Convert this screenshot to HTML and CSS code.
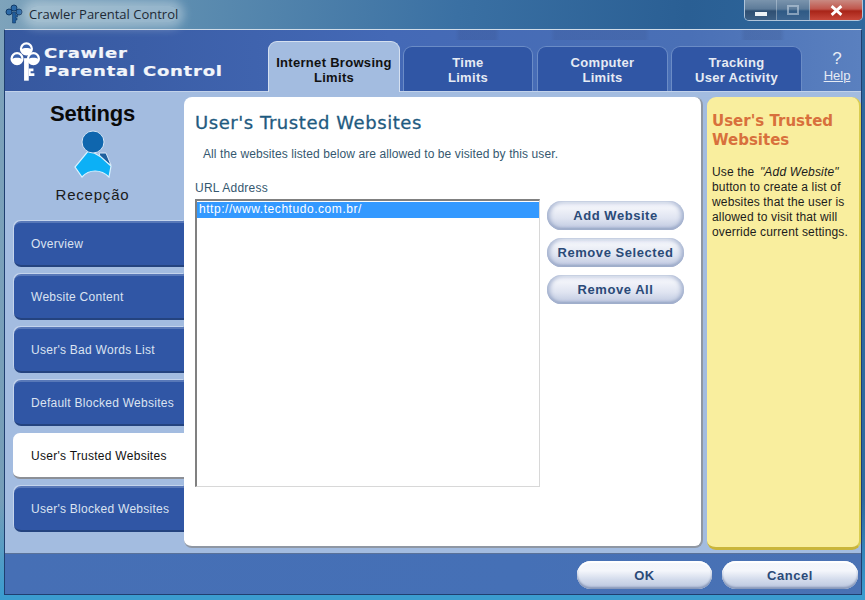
FILE: index.html
```html
<!DOCTYPE html>
<html lang="en">
<head>
<meta charset="utf-8">
<title>Crawler Parental Control</title>
<link rel="stylesheet" href="styles.css">
</head>
<body>
<div class="desktop">
  <div class="titlebar">
    <svg class="title-icon" viewBox="0 0 18 20" aria-hidden="true">
      <circle cx="9" cy="4" r="3" fill="#2c6aa8" stroke="#123a66"/>
      <circle cx="4" cy="8" r="3" fill="#2c6aa8" stroke="#123a66"/>
      <circle cx="14" cy="8" r="3" fill="#2c6aa8" stroke="#123a66"/>
      <path d="M7.500 8h3v3h2v2h-2v1h1.500v2h-1.500v3h-3z" fill="#1f5c9c" stroke="#123a66" stroke-width=".6"/>
    </svg>
    <span class="title-text">Crawler Parental Control</span>
    <div class="controls">
      <div class="ctl ctl-min"><span class="min-glyph"></span></div>
      <div class="ctl ctl-max"><span class="max-glyph"></span></div>
      <div class="ctl ctl-close">
        <svg class="close-glyph" viewBox="0 0 12 10" aria-hidden="true"><path d="M1.500 1l9 8M10.500 1l-9 8" stroke="#fff" stroke-width="2.600" fill="none"/></svg>
      </div>
    </div>
  </div>

  <div class="window">
    <header class="header">
      <div class="logo">
        <svg class="logo-key" viewBox="0 0 32 42" aria-hidden="true">
          <path d="M15 18h5v24h-5z" fill="#fff"/>
          <path d="M20 29h5v3h-3v2h4v3h-6z" fill="#fff"/>
          <g fill="#3a62ad" stroke="#fff" stroke-width="2.400">
            <circle cx="17.500" cy="8" r="5.800"/>
            <circle cx="7.500" cy="18.500" r="5.800"/>
            <circle cx="25" cy="18.500" r="5.800"/>
          </g>
          <g fill="#fff">
            <path d="M12 8.500a5.500 5.500 0 0 0 11 0c-3-2-8-2-11 0z"/>
            <path d="M2 19a5.500 5.500 0 0 0 11 0c-3-2-8-2-11 0z"/>
            <path d="M19.500 19a5.500 5.500 0 0 0 11 0c-3-2-8-2-11 0z"/>
          </g>
        </svg>
        <div class="logo-text">Crawler<br>Parental Control</div>
      </div>
      <nav class="tabs">
        <div class="tab tab-active">Internet Browsing<br>Limits</div>
        <div class="tab tab-narrow">Time<br>Limits</div>
        <div class="tab tab-wide">Computer<br>Limits</div>
        <div class="tab">Tracking<br>User Activity</div>
      </nav>
      <div class="help"><span class="help-mark">?</span><a class="help-link">Help</a></div>
    </header>

    <main class="main">
      <aside class="sidebar">
        <h2 class="settings">Settings</h2>
        <svg class="user-icon" viewBox="0 0 40 48" aria-hidden="true">
          <path d="M25 23l7 0 5 12-10-6z" fill="#1f5f9e" stroke="#d8e6f6" stroke-width="1"/>
          <path d="M15 20l12 7 10 9-2 11c-8-8-20-8-27 0l-7-10z" fill="#0cb0f6" stroke="#d8f2ff" stroke-width="1.200"/>
          <circle cx="19" cy="12" r="11" fill="#0f66ae" stroke="#d8e6f6" stroke-width="1"/>
        </svg>
        <div class="user-name">Recepção</div>
        <ul class="nav">
          <li class="nav-item">Overview</li>
          <li class="nav-item">Website Content</li>
          <li class="nav-item">User's Bad Words List</li>
          <li class="nav-item">Default Blocked Websites</li>
          <li class="nav-item nav-active">User's Trusted Websites</li>
          <li class="nav-item">User's Blocked Websites</li>
        </ul>
      </aside>

      <section class="content">
        <h1 class="content-title">User's Trusted Websites</h1>
        <p class="content-desc">All the websites listed below are allowed to be visited by this user.</p>
        <label class="url-label">URL Address</label>
        <div class="list-row">
          <div class="listbox">
            <div class="list-selected">http://www.techtudo.com.br/</div>
          </div>
          <div class="side-buttons">
            <button class="pill">Add Website</button>
            <button class="pill">Remove Selected</button>
            <button class="pill">Remove All</button>
          </div>
        </div>
      </section>

      <aside class="tip">
        <h3 class="tip-title">User's Trusted<br>Websites</h3>
        <p class="tip-body">Use the <em class="tip-em">"Add Website"</em><br>button to create a list of<br>websites that the user is<br>allowed to visit that will<br>override current settings.</p>
      </aside>
    </main>

    <footer class="footer">
      <button class="pill pill-footer">OK</button>
      <button class="pill pill-footer">Cancel</button>
    </footer>
  </div>
</div>
</body>
</html>
```
FILE: styles.css
```css
* { box-sizing: border-box; }
html, body { margin: 0; padding: 0; }
body { width: 865px; height: 600px; overflow: hidden; font-family: "Liberation Sans", Arial, sans-serif; }

.desktop {
  width: 865px; height: 600px; overflow: hidden;
  background:
    linear-gradient(180deg, transparent 0, transparent 500px, #3b9ccf 596px),
    linear-gradient(95deg, #7ea3bb 0, #5d8db0 20%, #3a70a3 50%, #2a5f94 75%, #2f6aa0 100%);
}

/* Title bar */
.titlebar { height: 29px; display: flex; align-items: flex-start; position: relative; }
.title-icon { width: 18px; height: 20px; margin: 4px 0 0 5px; flex: none; }
.title-text {
  margin: 6px 0 0 6px; font-family: "Open Sans", sans-serif; font-size: 13px; line-height: 16px; color: #1d2a36;
  background: rgba(215, 228, 236, .45); box-shadow: 0 0 10px 6px rgba(215, 228, 236, .45); border-radius: 8px;
  white-space: nowrap;
}
.controls {
  margin-left: auto; margin-right: 2px; display: flex; height: 21px; width: 119px;
  border: 1px solid rgba(220, 230, 240, .75); border-top: 0; border-radius: 0 0 5px 5px; overflow: hidden;
}
.ctl { display: flex; align-items: center; justify-content: center; border-right: 1px solid rgba(220, 230, 240, .4); }
.ctl-min { width: 32px; background: linear-gradient(180deg, #7a94ad 0, #5d7b99 45%, #2f4f72 55%, #3d5f84 100%); }
.ctl-max { width: 33px; background: linear-gradient(180deg, #7a94ad 0, #5d7b99 45%, #2f5a85 55%, #3d6590 100%); }
.ctl-close { flex: 1; border-right: 0; background: linear-gradient(180deg, #c98a82 0, #c0564c 45%, #a82418 55%, #c8473a 100%); }
.min-glyph { width: 12px; height: 4px; background: #eef2f6; margin-top: 8px; }
.max-glyph { width: 12px; height: 10px; border: 2px solid rgba(200, 215, 230, .55); }
.close-glyph { width: 13px; height: 11px; }

/* Window */
.window {
  margin-left: 4px; width: 858px; height: 566px;
  border: 1px solid #1f3f70; border-top-color: #cfdbe8;
  display: flex; flex-direction: column;
}
.header {
  height: 61px; display: flex; align-items: flex-end; flex: none;
  background:
    linear-gradient(90deg, transparent 450px, rgba(50, 70, 120, .18) 455px, rgba(50, 70, 120, .18) 490px, transparent 495px, transparent 545px, rgba(50, 70, 120, .15) 550px, rgba(50, 70, 120, .15) 640px, transparent 645px, transparent 735px, rgba(50, 70, 120, .18) 740px, rgba(50, 70, 120, .18) 775px, transparent 780px) 0 0 / 100% 10px no-repeat,
    linear-gradient(90deg, #36589f 0, #4469b6 45%, #4a70b6 80%, #5a80bf 100%);
}
.logo { width: 263px; height: 61px; display: flex; align-items: flex-start; flex: none; }
.logo-key { width: 30px; height: 40px; margin: 11px 0 0 5px; flex: none; }
.logo-text {
  margin: 14px 0 0 4px; font-family: "DejaVu Sans", sans-serif; font-weight: 700; font-size: 14px; line-height: 18px;
  letter-spacing: .6px; color: #f2f5fa; white-space: nowrap; transform: scaleX(1.286); transform-origin: 0 0;
  -webkit-text-stroke: .2px #f2f5fa;
}
.tabs { display: flex; gap: 3px; align-items: flex-end; flex: none; }
.tab {
  width: 131px; height: 45px; padding-top: 8px; text-align: center; font-weight: 700; font-size: 13px; line-height: 15px;
  letter-spacing: .3px; color: #e6ebf4; background: #3056a5; border: 1px solid #6b8cc6; border-bottom: 0; border-radius: 9px 9px 0 0;
}
.tab-narrow { width: 130px; }
.tab-wide { margin-left: 1px; }
.tab-active {
  width: 132px; height: 51px; margin-bottom: -1px; padding-top: 13px; color: #111;
  background: #a3bce0; border: 1px solid #d5e0f0; border-bottom: 0; position: relative; z-index: 1;
}
.help { flex: 1; height: 61px; display: flex; flex-direction: column; align-items: center; padding: 19px 0 0 11px; color: #e6ebf4; }
.help-mark { font-size: 17px; line-height: 19px; }
.help-link { font-size: 13px; line-height: 15px; text-decoration: underline; }

/* Main */
.main {
  height: 463px; display: flex; align-items: flex-start; flex: none; padding-top: 5px;
  background: #a3bce0; border-top: 1px solid #c2d2ea; border-bottom: 1px solid #5a7299;
}
.sidebar { width: 179px; flex: none; display: flex; flex-direction: column; align-items: center; }
.settings { margin: 4px 0 0 -4px; font-size: 22px; line-height: 26px; font-weight: 700; color: #0a0a0a; letter-spacing: -.2px; }
.user-icon { width: 40px; height: 48px; margin: 3px 0 0 -2px; display: block; }
.user-name { margin: 8px 0 0 -4px; font-size: 15px; line-height: 18px; letter-spacing: .8px; color: #1a1a1a; }
.nav { list-style: none; margin: 17px 0 0; padding: 0 0 0 9px; width: 100%; display: flex; flex-direction: column; gap: 7px; }
.nav-item {
  height: 46px; padding-left: 17px; display: flex; align-items: center; font-size: 12px; letter-spacing: .27px; color: #dbe3f1;
  background: #3056a5; border-radius: 7px 0 0 7px; border-top: 2px solid #5878b8; border-bottom: 2px solid #24437f;
  box-shadow: -1px -1px 0 #c4d4ec;
}
.nav-active {
  color: #111; background: #fff; border-top-color: #fff; border-bottom-color: #8c8f96; box-shadow: none;
  margin-left: -1px; padding-left: 18px;
}

/* Content */
.content {
  width: 519px; height: 451px; flex: none; padding: 14px 0 0 11px; background: #fff;
  border-radius: 8px; border-right: 2px solid #8f97a3; border-bottom: 2px solid #8f97a3;
  display: flex; flex-direction: column; align-items: flex-start;
}
.content-title { margin: 0; font-family: "DejaVu Sans", sans-serif; font-size: 18px; line-height: 24px; font-weight: 400; color: #1e5a80; letter-spacing: .56px; -webkit-text-stroke: .3px #1e5a80; }
.content-desc { margin: 12px 0 0 8px; font-size: 12px; line-height: 15px; color: #35586f; letter-spacing: .09px; }
.url-label { margin-top: 19px; font-size: 12px; line-height: 14px; letter-spacing: .25px; color: #35586f; }
.list-row { display: flex; align-items: flex-start; gap: 7px; margin-top: 4px; }
.listbox {
  width: 345px; height: 288px; padding-top: 1px; background: #fff;
  border-left: 2px solid #808080; border-top: 2px solid #808080; border-right: 1px solid #d8d8d8; border-bottom: 1px solid #d8d8d8;
}
.list-selected { height: 16px; line-height: 15px; padding-left: 2px; font-size: 12px; letter-spacing: .55px; color: #fff; background: #3399ff; }
.side-buttons { display: flex; flex-direction: column; gap: 8px; padding-top: 2px; }

.pill {
  width: 137px; height: 29px; padding: 0; border: 0; border-radius: 15px; font-family: "Liberation Sans", sans-serif;
  font-weight: 700; font-size: 13px; letter-spacing: .55px; color: #2a4a78;
  background: linear-gradient(180deg, #e6eaf5 0, #f1f3f9 25%, #dfe4f1 60%, #bcc6de 100%);
  box-shadow: inset 3px 0 4px #a9b6d2, inset -3px 0 4px #a9b6d2, inset 0 -2px 2px #8f9dbd, inset 0 2px 1px #fff;
}
.pill-footer { width: 135px; height: 28px; background: linear-gradient(180deg, #f3f5fa 0, #f4f6fb 35%, #d4dcec 65%, #b9c5de 100%); box-shadow: inset 0 2px 1px #fff, inset 0 -2px 2px #8696b8, inset 0 0 0 1px #c9d4e8; }

/* Tip */
.tip {
  width: 154px; height: 453px; margin-left: 4px; flex: none; padding: 15px 0 0 5px; background: #f9ee9e;
  border-radius: 9px; border-bottom: 3px solid #c9b53a; border-right: 2px solid #d8cc50;
}
.tip-title { margin: 0; font-family: "DejaVu Sans", sans-serif; font-size: 15px; line-height: 19px; font-weight: 700; color: #d8703c; }
.tip-body { margin: 15px 0 0; font-size: 12px; line-height: 15px; letter-spacing: .15px; color: #1c1c1c; white-space: nowrap; }
.tip-em { font-style: italic; letter-spacing: .2px; margin-left: 2px; }

/* Footer */
.footer {
  flex: 1; display: flex; justify-content: flex-end; align-items: flex-start; gap: 10px; padding: 7px 3px 0 0;
  background: linear-gradient(90deg, #466fb5 0, #4570b6 60%, #4a72b4 100%);
}
.pill-footer:last-child { width: 136px; }
```
